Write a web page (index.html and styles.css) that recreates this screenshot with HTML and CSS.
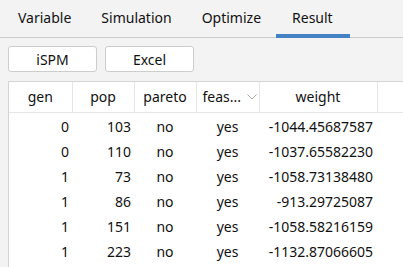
FILE: index.html
```html
<!DOCTYPE html>
<html>
<head>
<meta charset="utf-8">
<link rel="stylesheet" href="styles.css">
</head>
<body>
<div class="tabs">
  <div class="tab">Variable</div>
  <div class="tab">Simulation</div>
  <div class="tab">Optimize</div>
  <div class="tab active">Result</div>
</div>
<div class="toolbar">
  <button class="btn">iSPM</button>
  <button class="btn">Excel</button>
</div>
<div class="grid-wrap">
<table class="grid">
  <colgroup>
    <col class="c-gen"><col class="c-pop"><col class="c-pareto"><col class="c-feas"><col class="c-weight"><col class="c-extra">
  </colgroup>
  <thead>
    <tr>
      <th>gen</th><th>pop</th><th>pareto</th>
      <th class="feas"><span class="feas-label">feas...</span><svg class="chev" width="10" height="6" viewBox="0 0 10 6"><path d="M0.5 0.5 L5 5 L9.5 0.5" fill="none" stroke="#a6a6a6" stroke-width="1"/></svg></th>
      <th>weight</th><th></th>
    </tr>
  </thead>
  <tbody>
    <tr><td class="num">0</td><td class="num">103</td><td class="ctr">no</td><td class="ctr">yes</td><td class="num w">-1044.45687587</td><td></td></tr>
    <tr><td class="num">0</td><td class="num">110</td><td class="ctr">no</td><td class="ctr">yes</td><td class="num w">-1037.65582230</td><td></td></tr>
    <tr><td class="num">1</td><td class="num">73</td><td class="ctr">no</td><td class="ctr">yes</td><td class="num w">-1058.73138480</td><td></td></tr>
    <tr><td class="num">1</td><td class="num">86</td><td class="ctr">no</td><td class="ctr">yes</td><td class="num w">-913.29725087</td><td></td></tr>
    <tr><td class="num">1</td><td class="num">151</td><td class="ctr">no</td><td class="ctr">yes</td><td class="num w">-1058.58216159</td><td></td></tr>
    <tr><td class="num">1</td><td class="num">223</td><td class="ctr">no</td><td class="ctr">yes</td><td class="num w">-1132.87066605</td><td></td></tr>
  </tbody>
</table>
</div>
</body>
</html>
```
FILE: styles.css
```css
html, body {
  margin: 0;
  padding: 0;
  background: #f3f3f3;
  font-family: "Noto Sans", "Segoe UI", sans-serif;
  font-size: 14px;
  color: #111;
  overflow: hidden;
  width: 403px;
  height: 267px;
}
.tabs {
  display: flex;
  height: 38px;
  box-shadow: inset 0 -1px 0 #cbcbcb;
  padding-left: 3px;
}
.tab {
  box-sizing: border-box;
  height: 38px;
  padding: 8px 15px 0;
  border-bottom: 4px solid transparent;
}
.tab.active {
  border-bottom-color: #4381c4;
  padding: 8px 17px 0 16px;
}
.toolbar {
  display: flex;
  gap: 8px;
  padding: 8px 8px 0;
}
.btn {
  box-sizing: border-box;
  width: 89px;
  height: 26px;
  background: #fff;
  border: 1px solid #cdcdcd;
  border-radius: 3px;
  font: inherit;
  color: #111;
  padding: 0;
}
.grid-wrap {
  margin: 9px 0 0 8px;
  background: #fff;
  border-top: 1px solid #d4d4d4;
  border-left: 1px solid #d4d4d4;
  height: 185px;
  overflow: hidden;
}
.grid {
  border-collapse: collapse;
  table-layout: fixed;
  width: 460px;
}
.c-gen { width: 63px; }
.c-pop { width: 62px; }
.c-pareto { width: 62px; }
.c-feas { width: 63px; }
.c-weight { width: 118px; }
.c-extra { width: 92px; }
th {
  height: 30px;
  padding: 0;
  font-weight: normal;
  border-right: 1px solid #e6e6e6;
  border-bottom: 1px solid #e6e6e6;
  text-align: center;
  box-sizing: border-box;
}
th.feas {
  text-align: left;
  padding-left: 6px;
  white-space: nowrap;
}
.chev {
  margin-left: 6px;
  vertical-align: 2px;
}
tbody tr { height: 25px; }
tbody tr:first-child { height: 27px; }
tbody tr:first-child td { padding-top: 2px; }
td {
  padding: 0;
  white-space: nowrap;
}
td.num { text-align: right; padding-right: 3px; }
td.num.w { padding-right: 4px; }
td.ctr { text-align: center; }
```
